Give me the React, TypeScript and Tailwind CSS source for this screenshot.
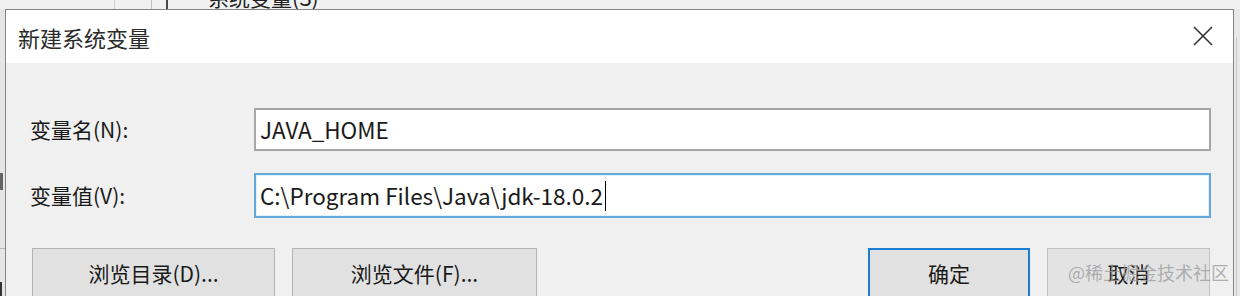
export default function App() {
  return (
    <div className="relative flex h-[296px] w-[1240px] flex-col overflow-hidden bg-[#e9e9e9] font-['Noto_Sans_CJK_SC',sans-serif] text-[#1a1a1a]">
      {/* underlying window, top strip */}
      <div className="flex h-[9px] shrink-0 bg-[#f1f1f1]">
        <div className="w-[115px] border-r border-[#cfcfcf]" />
        <div className="w-[37px] border-r border-[#c4c4c4]" />
        <div className="w-[16px] border-r-2 border-[#4a4a4a]" />
        <div className="overflow-hidden pl-[40px]">
          <div className="-mt-[15px] whitespace-nowrap text-[21px] leading-[24px] text-[#222]">系统变量(S)</div>
        </div>
      </div>

      <div className="flex min-h-0 flex-1">
        {/* underlying window, left strip */}
        <div className="flex w-[5px] shrink-0 flex-col bg-[#e6e6e6]">
          <div className="h-[166px]" />
          <div className="h-[18px] w-[3px] bg-[#666]" />
          <div className="h-[58px]" />
          <div className="h-px bg-[#b5b5b5]" />
          <div className="h-[34px]" />
          <div className="h-[14px] w-[2px] bg-[#333]" />
        </div>

        {/* dialog */}
        <div className="flex w-[1229px] shrink-0 flex-col border-l border-r border-t border-[#858585]">
          <div className="flex h-[53px] shrink-0 items-center justify-between bg-white pl-[12px] pr-[20px]">
            <div className="text-[22px] leading-none text-[#2b2b2b]">新建系统变量</div>
            <svg width="20" height="20" viewBox="0 0 20 20" className="mt-[-2px]">
              <path d="M1 1 L19 19 M19 1 L1 19" stroke="#333" strokeWidth="1.6" fill="none" />
            </svg>
          </div>

          <div className="flex flex-1 flex-col bg-[#f0f0f0] pt-[45px]">
            <div className="flex h-[43px] items-center">
              <div className="w-[248px] shrink-0 pl-[24px] text-[21px] leading-none">变量名(N):</div>
              <div className="flex h-[43px] w-[957px] items-center border-2 border-[#a6a6a6] bg-white pl-[4px] text-[22.5px] leading-none">
                JAVA_HOME
              </div>
            </div>

            <div className="mt-[22px] flex h-[45px] items-center">
              <div className="w-[248px] shrink-0 pl-[24px] text-[21px] leading-none">变量值(V):</div>
              <div className="flex h-[45px] w-[957px] items-center border-2 border-[#63a8d9] bg-white pl-[4px] text-[22.5px] leading-none shadow-[inset_0_0_0_1px_#e3f1fb]">
                <span>C:\Program Files\Java\jdk-18.0.2</span>
                <span className="ml-[2px] h-[30px] w-px bg-black" />
              </div>
            </div>

            <div className="mt-[30px] flex pl-[26px]">
              <div className="flex h-[50px] w-[243px] shrink-0 items-center justify-center border border-[#b4b4b4] bg-[#e1e1e1] text-[21px] leading-none">
                浏览目录(D)...
              </div>
              <div className="ml-[17px] flex h-[50px] w-[245px] shrink-0 items-center justify-center border border-[#b4b4b4] bg-[#e1e1e1] text-[21px] leading-none">
                浏览文件(F)...
              </div>
              <div className="ml-[331px] flex h-[50px] w-[162px] shrink-0 items-center justify-center border-2 border-[#1a7fd4] bg-[#e1e1e1] text-[21px] leading-none">
                确定
              </div>
              <div className="relative ml-[17px] flex h-[50px] w-[163px] shrink-0 items-center justify-center border border-[#c2c2c2] bg-[#e3e3e3] text-[21px] leading-none">
                取消
              </div>
            </div>
          </div>
        </div>

        {/* underlying window, right strip */}
        <div className="flex w-[6px] shrink-0 flex-col bg-[#e8e8e8]">
          <div className="h-[28px]" />
          <div className="ml-[2px] w-px flex-1 bg-[#c8c8c8]" />
        </div>
      </div>

      {/* watermark */}
      <div className="pointer-events-none absolute left-[1068px] top-[260px] whitespace-nowrap text-[18px] leading-[24px] text-[#999999]/75">
        @稀土掘金技术社区
      </div>
    </div>
  );
}
